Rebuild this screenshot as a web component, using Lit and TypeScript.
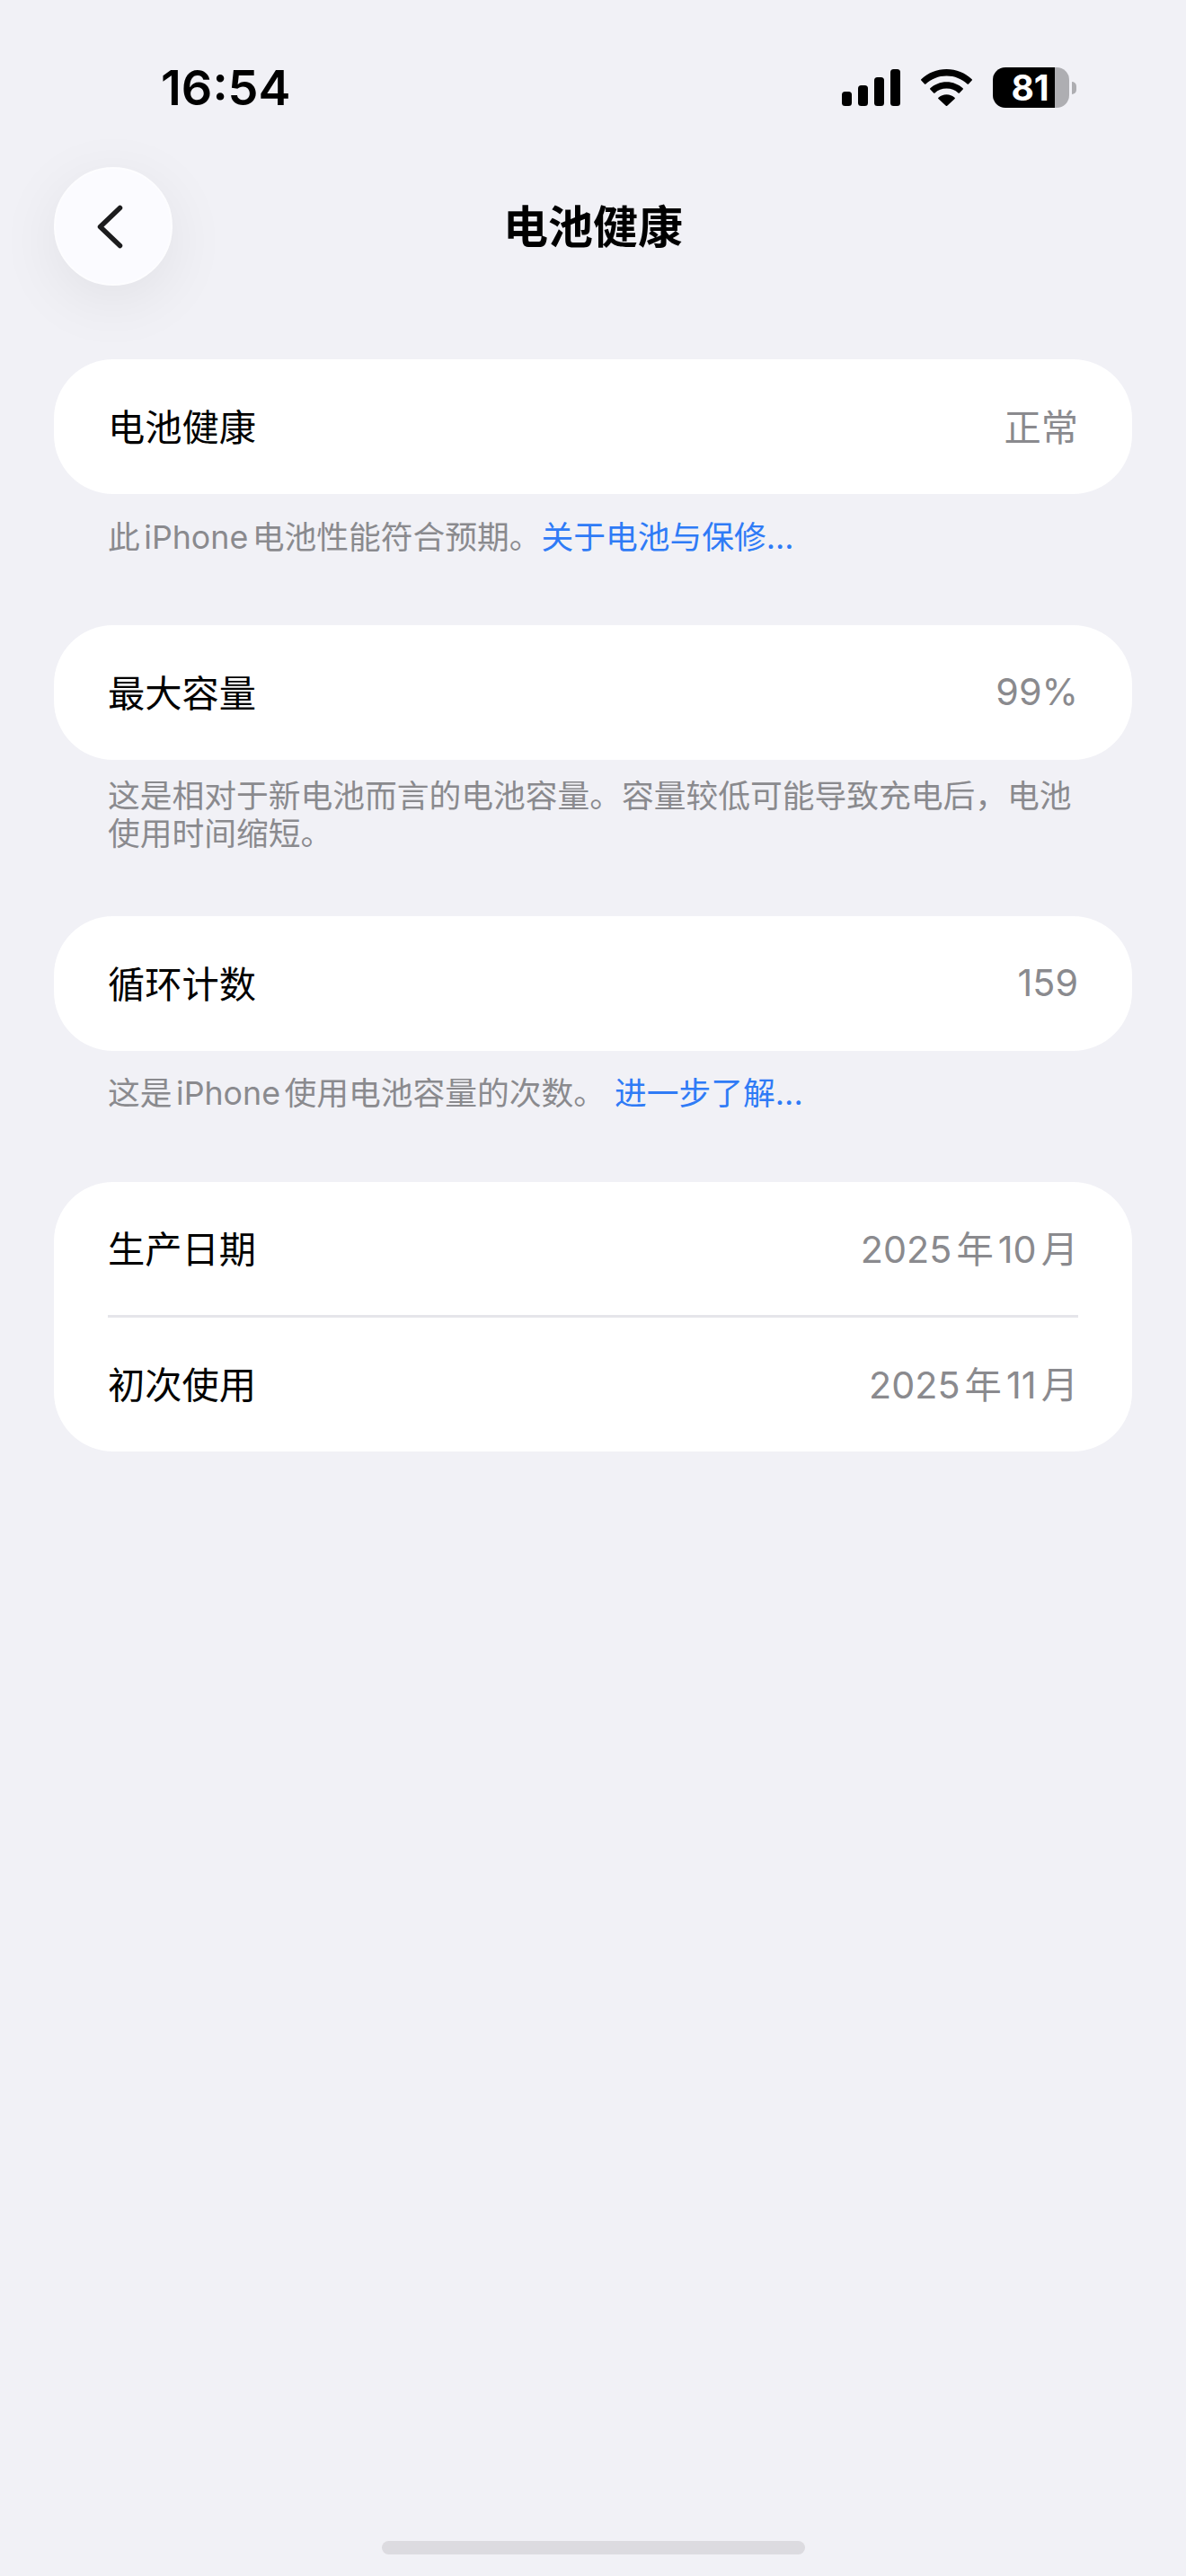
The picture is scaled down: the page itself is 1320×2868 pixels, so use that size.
import { LitElement, html, css } from "lit";
import { customElement } from "lit/decorators.js";

const FONT = css`Inter, "Noto Sans CJK SC", "Noto Sans", sans-serif`;

@customElement("app-root")
export class AppRoot extends LitElement {
  static styles = css`
    :host {
      display: flex;
      flex-direction: column;
      width: 1320px;
      height: 2868px;
      background: #f1f1f6;
      font-family: ${FONT};
      text-autospace: normal;
      overflow: hidden;
    }
    .status {
      height: 186px;
      box-sizing: border-box;
      display: flex;
      align-items: flex-start;
      padding: 65px 122px 0 179px;
    }
    .time {
      font-size: 54px;
      line-height: 65px;
      font-weight: 600;
      color: #000;
    }
    .icons {
      margin-left: auto;
      display: flex;
      align-items: center;
      height: 65px;
    }
    .signal { display: block; width: 65px; height: 41px; }
    .wifi { display: block; width: 57px; height: 41px; margin-left: 23px; }
    .battery { display: flex; align-items: center; margin-left: 23px; }
    .cell {
      width: 85px;
      height: 45px;
      border-radius: 14px;
      overflow: hidden;
      background: linear-gradient(to right, #000 81%, #aeaeb2 81%);
      color: #fff;
      font-size: 39px;
      line-height: 45px;
      font-weight: 700;
      text-align: center;
      box-sizing: border-box;
      padding-right: 2px;
    }
    .tip {
      width: 5px;
      height: 14px;
      margin-left: 3px;
      background: #aeaeb2;
      border-radius: 0 7px 7px 0;
    }
    .nav {
      display: grid;
      grid-template-columns: 132px 1fr 132px;
      align-items: center;
      height: 132px;
      padding: 0 60px;
    }
    .back {
      width: 132px;
      height: 132px;
      box-sizing: border-box;
      border-radius: 50%;
      background: #fbfbff;
      border: 2px solid #fdfdff;
      box-shadow: 0 16px 70px rgba(0, 0, 0, 0.07);
      display: flex;
      align-items: center;
      justify-content: center;
    }
    .back svg { display: block; width: 132px; height: 132px; flex: none; }
    .title {
      text-align: center;
      font-size: 50px;
      line-height: 60px;
      font-weight: 600;
      color: #000;
      padding-top: 2px;
    }
    .content {
      display: flex;
      flex-direction: column;
      padding: 82px 60px 0;
    }
    .card {
      background: #fff;
      border-radius: 66px;
      padding: 0 60px;
    }
    .row {
      height: 150px;
      box-sizing: border-box;
      padding-bottom: 5px;
      display: flex;
      align-items: center;
      justify-content: space-between;
      font-size: 41.25px;
      color: #000;
    }
    .row.first { height: 148px; }
    .row.last { height: 149px; }
    .divider { height: 3px; background: #e5e5ea; }
    .value { color: #8a8a8e; }
    .value.num { padding-top: 3px; }
    .note {
      margin: 0;
      padding: 27px 60px 77px;
      font-size: 35.75px;
      line-height: 42px;
      color: #8a8a8e;
    }
    .note.wide { padding: 19px 60px 71px; }
    .note.third { padding: 26px 60px 78px; }
    .note a { color: #2f7bf6; text-decoration: none; }
    .home {
      margin: auto auto 24px;
      width: 471px;
      height: 15px;
      border-radius: 8px;
      background: #dcdbe0;
    }
  `;

  render() {
    return html`
      <div class="status">
        <div class="time">16:54</div>
        <div class="icons">
          <svg class="signal" viewBox="0 0 65 41" fill="#000">
            <rect x="0" y="25" width="11" height="16" rx="3.5" />
            <rect x="18" y="18" width="11" height="23" rx="3.5" />
            <rect x="36" y="9" width="11" height="32" rx="3.5" />
            <rect x="54" y="0" width="11" height="41" rx="3.5" />
          </svg>
          <svg class="wifi" viewBox="0 0 57 41" fill="#000">
            <path d="M28.5 0C17.6 0 7.8 4.2 0.3 11.2c-.4.4-.4 1 0 1.4l3.7 3.8c.4.4 1 .4 1.4 0C11.5 10.8 19.6 7.4 28.5 7.4s17 3.4 23.1 9c.4.4 1 .4 1.4 0l3.7-3.8c.4-.4.4-1 0-1.4C49.2 4.2 39.4 0 28.5 0z" />
            <path d="M28.5 14.2c-7 0-13.4 2.7-18.2 7-.4.4-.4 1 0 1.4l3.8 3.8c.4.4 1 .4 1.4 0 3.4-3 8-4.8 13-4.8s9.6 1.8 13 4.8c.4.4 1 .4 1.4 0l3.8-3.8c.4-.4.4-1 0-1.4-4.8-4.3-11.2-7-18.2-7z" />
            <path d="M28.5 28.2c-3.5 0-6.7 1.3-9.1 3.5-.4.4-.4 1 0 1.4l8.4 7.6c.4.4 1 .4 1.4 0l8.4-7.6c.4-.4.4-1 0-1.4-2.4-2.2-5.6-3.5-9.1-3.5z" />
          </svg>
          <div class="battery">
            <div class="cell">81</div>
            <div class="tip"></div>
          </div>
        </div>
      </div>
      <div class="nav">
        <div class="back">
          <svg viewBox="0 0 132 132" fill="none" stroke="#1c1c1e" stroke-width="5.5" stroke-linecap="round" stroke-linejoin="round">
            <path d="M73.5 45.5 L51.5 66.5 L73.5 87.5" />
          </svg>
        </div>
        <div class="title">电池健康</div>
        <div></div>
      </div>
      <div class="content">
        <div class="card">
          <div class="row"><span>电池健康</span><span class="value">正常</span></div>
        </div>
        <p class="note">此iPhone电池性能符合预期。<a>关于电池与保修...</a></p>
        <div class="card">
          <div class="row"><span>最大容量</span><span class="value num">99%</span></div>
        </div>
        <p class="note wide">这是相对于新电池而言的电池容量。容量较低可能导致充电后，电池使用时间缩短。</p>
        <div class="card">
          <div class="row"><span>循环计数</span><span class="value num">159</span></div>
        </div>
        <p class="note third">这是iPhone使用电池容量的次数。 <a>进一步了解...</a></p>
        <div class="card">
          <div class="row first"><span>生产日期</span><span class="value">2025年10月</span></div>
          <div class="divider"></div>
          <div class="row last"><span>初次使用</span><span class="value">2025年11月</span></div>
        </div>
      </div>
      <div class="home"></div>
    `;
  }
}
